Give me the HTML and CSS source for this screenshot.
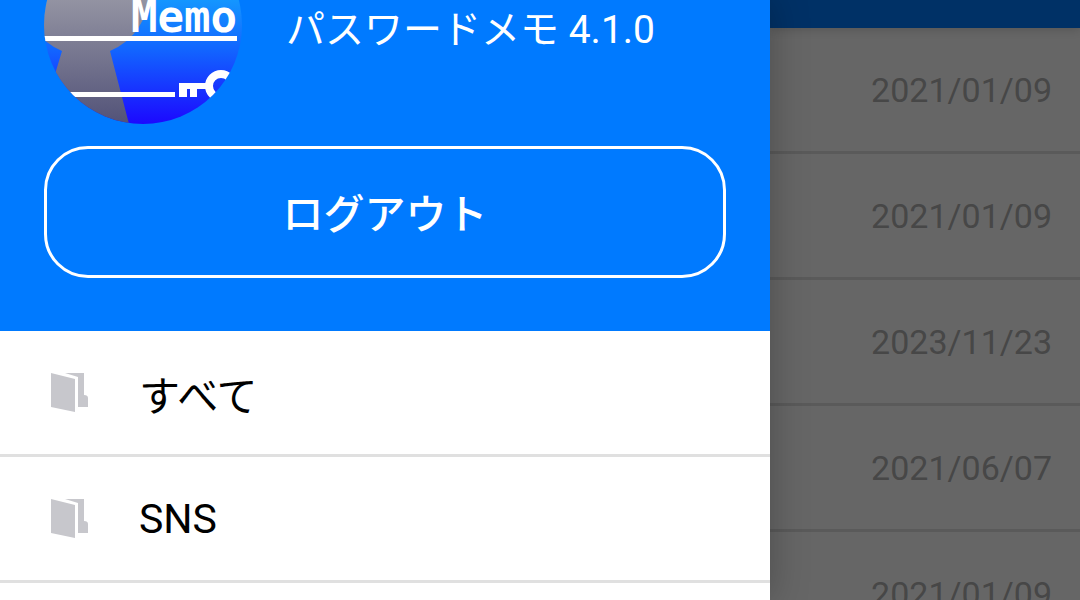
FILE: index.html
```html
<!DOCTYPE html>
<html lang="ja">
<head>
<meta charset="utf-8">
<meta name="viewport" content="width=device-width, initial-scale=1">
<title>パスワードメモ</title>
<link rel="stylesheet" href="styles.css">
</head>
<body>
<div class="app">
  <aside class="drawer">
    <header class="drawer-header">
      <div class="profile">
        <svg class="avatar" viewBox="0 0 198 124" role="img" aria-label="Memo">
          <defs>
            <linearGradient id="sky" x1="0" y1="0" x2="0" y2="1">
              <stop offset="0" stop-color="#1496ff"/>
              <stop offset=".4" stop-color="#1265ff"/>
              <stop offset="1" stop-color="#1c08ff"/>
            </linearGradient>
            <linearGradient id="figure" gradientUnits="userSpaceOnUse" x1="0" y1="0" x2="0" y2="124">
              <stop offset="0" stop-color="#9393a2"/>
              <stop offset="1" stop-color="#525278"/>
            </linearGradient>
            <clipPath id="round"><circle cx="99" cy="25" r="99"/></clipPath>
          </defs>
          <g clip-path="url(#round)">
            <rect width="198" height="124" fill="url(#sky)"/>
            <path fill="url(#figure)" d="M-21 -7A63 63 0 0 0 18 51L-4 124H85L66 51A63 63 0 0 0 105 -7Z"/>
            <g fill="#fff">
              <rect y="36" width="193" height="5"/>
              <rect y="92" width="131" height="5"/>
              <path d="M135 83H164V89H153V97H146V89H143V97H135Z"/>
            </g>
            <circle cx="177" cy="86" r="12" fill="none" stroke="#fff" stroke-width="8"/>
            <text class="avatar-text" x="87" y="32">Memo</text>
          </g>
        </svg>
        <h1 class="app-name">パスワードメモ 4.1.0</h1>
      </div>
      <button class="logout" type="button">ログアウト</button>
    </header>
    <nav>
      <ul class="list">
        <li class="row"><a class="folder" href="#all">
          <svg class="folder-icon" viewBox="0 0 37 39" aria-hidden="true"><path d="M0 0L24 6V39L0 34ZM14 0H33V22Q37 22 37 25V34H27V4Z"/></svg>
          <span>すべて</span></a></li>
        <li class="row"><a class="folder" href="#sns">
          <svg class="folder-icon" viewBox="0 0 37 39" aria-hidden="true"><path d="M0 0L24 6V39L0 34ZM14 0H33V22Q37 22 37 25V34H27V4Z"/></svg>
          <span>SNS</span></a></li>
      </ul>
    </nav>
  </aside>
  <main class="content">
    <div class="app-bar"></div>
    <ul class="list">
      <li class="row entry"><time datetime="2021-01-09">2021/01/09</time></li>
      <li class="row entry"><time datetime="2021-01-09">2021/01/09</time></li>
      <li class="row entry"><time datetime="2023-11-23">2023/11/23</time></li>
      <li class="row entry"><time datetime="2021-06-07">2021/06/07</time></li>
      <li class="row entry"><time datetime="2021-01-09">2021/01/09</time></li>
    </ul>
  </main>
</div>
</body>
</html>
```
FILE: styles.css
```css
* {
  box-sizing: border-box;
}

body {
  margin: 0;
  font-family: Roboto, "Noto Sans CJK JP", sans-serif;
}

.app {
  display: grid;
  grid-template-columns: 77fr 31fr;
  height: 100vh;
  overflow: hidden;
}

.drawer {
  z-index: 1;
  background: #fff;
  box-shadow: 0 0 36px rgba(0, 0, 0, .26);
}

.drawer-header {
  padding: 0 44px 53px;
  background: #007aff;
  color: #fff;
}

.profile {
  display: flex;
  gap: 44px;
  margin-bottom: 22px;
}

.avatar {
  flex: none;
  width: 198px;
  height: 124px;
}

.avatar-text {
  fill: #fff;
  font: bold 44px "DejaVu Sans Mono", monospace;
}

.app-name {
  margin: 0;
  font-size: 39px;
  font-weight: 400;
  line-height: 60px;
  white-space: nowrap;
}

.logout {
  display: block;
  width: 100%;
  height: 132px;
  padding: 6px 0 0;
  border: 3px solid #fff;
  border-radius: 44px;
  background: transparent;
  color: inherit;
  font: 500 41px/60px Roboto, "Noto Sans CJK JP", sans-serif;
}

.list {
  margin: 0;
  padding: 0;
  list-style: none;
}

.row {
  height: 126px;
  border-bottom: 3px solid #e0e0e0;
}

.folder {
  display: flex;
  align-items: center;
  gap: 51px;
  height: 100%;
  padding-left: 51px;
  color: #000;
  font-size: 41px;
  text-decoration: none;
}

.folder-icon {
  width: 37px;
  height: 39px;
  fill: #c7c7cc;
}

.content {
  overflow: hidden;
  background: #666;
}

.app-bar {
  position: relative;
  height: 28px;
  background: #003166;
  box-shadow: 0 2px 10px rgba(0, 0, 0, .16);
}

.entry {
  display: flex;
  align-items: center;
  justify-content: flex-end;
  padding-right: 28px;
  border-color: #5a5a5a;
  color: #474747;
  font-size: 34px;
}
```
